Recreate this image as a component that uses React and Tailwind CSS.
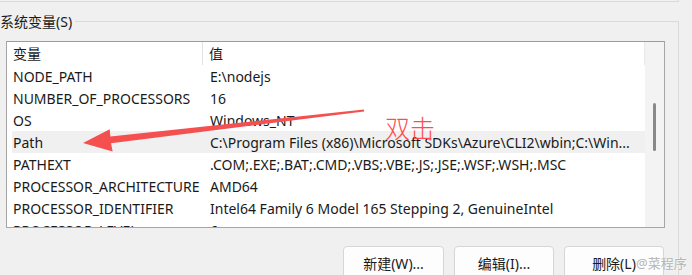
import React from "react";

const rows = [
  ["NODE_PATH", "E:\\nodejs"],
  ["NUMBER_OF_PROCESSORS", "16"],
  ["OS", "Windows_NT"],
  ["Path", "C:\\Program Files (x86)\\Microsoft SDKs\\Azure\\CLI2\\wbin;C:\\Win..."],
  ["PATHEXT", ".COM;.EXE;.BAT;.CMD;.VBS;.VBE;.JS;.JSE;.WSF;.WSH;.MSC"],
  ["PROCESSOR_ARCHITECTURE", "AMD64"],
  ["PROCESSOR_IDENTIFIER", "Intel64 Family 6 Model 165 Stepping 2, GenuineIntel"],
  ["PROCESSOR_LEVEL", "6"],
];

const font = { fontFamily: '"Noto Sans", "Noto Sans CJK SC", sans-serif' };

export default function App() {
  return (
    <div
      className="relative w-[692px] h-[275px] overflow-hidden bg-[#f0f0f0] text-[14px] text-[#1a1a1a]"
      style={font}
    >
      {/* remnant of upper group box */}
      <div className="w-[679px] h-[2px] border-b border-r border-[#dadada]" />

      {/* system variables group box */}
      <div className="relative mt-[19px] -ml-[10px] w-[689px] h-[300px] border border-[#dadada] pl-[15px] pt-[19px]">
        <span className="absolute left-[9px] -top-[10px] bg-[#f0f0f0] pr-[3px] leading-[20px]">
          系统变量(S)
        </span>

        {/* list box */}
        <div className="w-[659px] h-[187px] border border-[#a6a6a6] border-t-[#9c9c9c] bg-white flex overflow-hidden">
          <div className="flex-1 pl-[5px] flex flex-col">
            {/* header */}
            <div className="h-[23px] shrink-0 flex items-center">
              <div className="w-[191px] h-full flex items-center pl-[1px] border-r border-[#e3e3e3]">
                变量
              </div>
              <div className="flex-1 h-full flex items-center pl-[6px] border-r border-[#e8e8e8]">
                值
              </div>
            </div>
            {rows.map(([k, v]) => (
              <div
                key={k}
                className={
                  "h-[22px] shrink-0 flex items-center whitespace-nowrap " +
                  (k === "Path" ? "bg-[#f0f0f0]" : "")
                }
              >
                <div className="w-[192px] pl-[1px] overflow-hidden">{k}</div>
                <div className="flex-1 pl-[6px] overflow-hidden">{v}</div>
              </div>
            ))}
          </div>
          {/* scrollbar */}
          <div className="w-[19px] shrink-0 bg-[#f3f3f3] flex flex-col items-center">
            <div className="mt-[61px] w-[3px] h-[48px] rounded-full bg-[#898989] ml-[-1px]" />
          </div>
        </div>

        {/* buttons */}
        <div className="mt-[18px] w-[658px] flex justify-end gap-[10px]">
          <button className="w-[101px] h-[34px] rounded-[4px] border border-[#d6d6d6] bg-[#fdfdfd] text-[14px] text-[#1a1a1a]">
            新建(W)...
          </button>
          <button className="w-[100px] h-[34px] rounded-[4px] border border-[#d6d6d6] bg-[#fdfdfd] text-[14px] text-[#1a1a1a]">
            编辑(I)...
          </button>
          <button className="w-[100px] h-[34px] rounded-[4px] border border-[#d6d6d6] bg-[#fdfdfd] text-[14px] text-[#1a1a1a]">
            删除(L)
          </button>
        </div>
      </div>

      {/* annotation arrow */}
      <svg
        className="absolute left-0 top-0 pointer-events-none"
        width="692"
        height="275"
        viewBox="0 0 692 275"
      >
        <polygon
          points="364,109.6 364,111.4 111.1,143.2 112.6,151.5 83,143 109.7,129.2 110.4,136.6"
          fill="#f4504f"
        />
      </svg>
      <span className="absolute left-[385px] top-[113px] text-[25px] leading-[30px] font-light text-[#ff4d4f]">
        双击
      </span>

      {/* watermark */}
      <span className="absolute left-[636px] top-[254px] text-[13px] leading-[18px] text-[#b4b4b4] [text-shadow:0_0_2px_#ffffff]">
        @菜程序
      </span>
    </div>
  );
}
